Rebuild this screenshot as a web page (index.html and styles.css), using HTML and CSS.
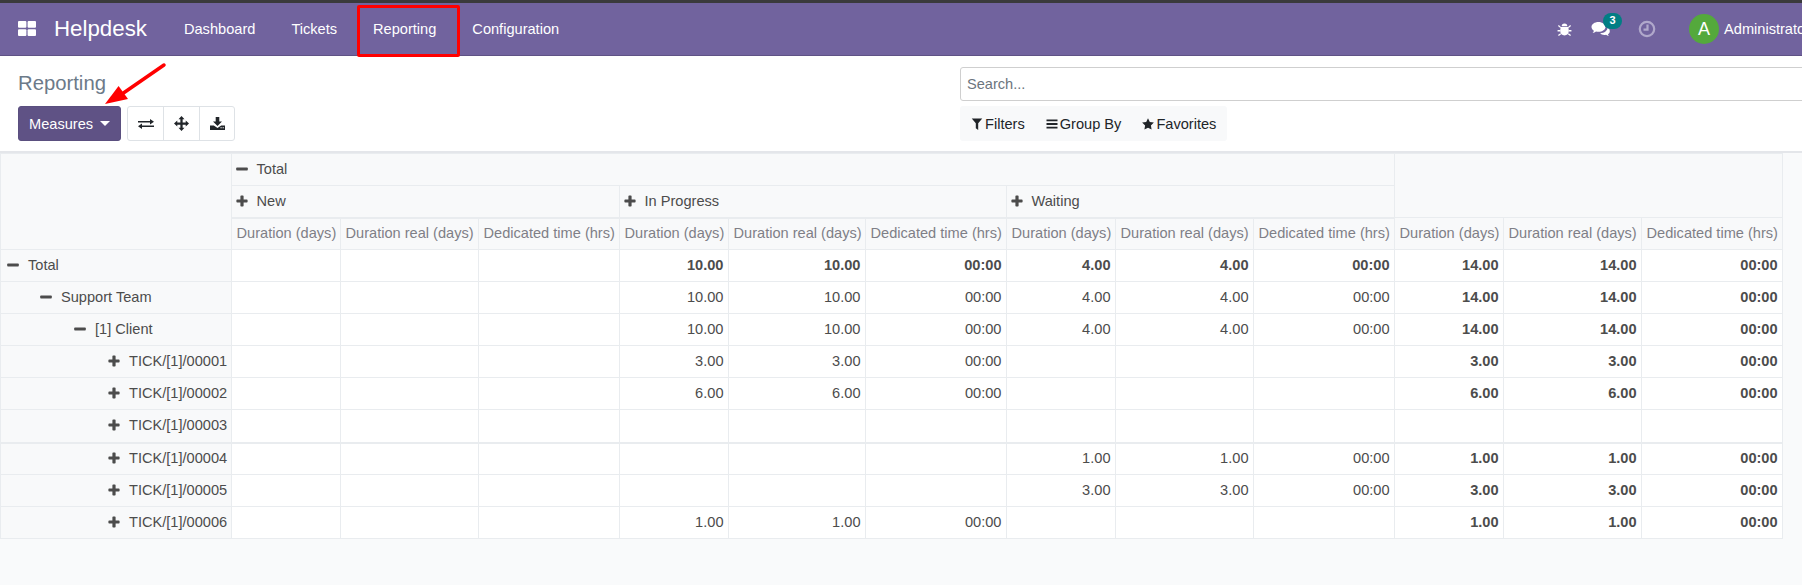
FILE: index.html
```html
<!DOCTYPE html>
<html lang="en">
<head>
<meta charset="utf-8">
<title>Helpdesk - Reporting</title>
<link rel="stylesheet" href="styles.css">
</head>
<body>
<svg class="defs" aria-hidden="true">
  <symbol id="i-plus" viewBox="0 0 12 12"><path d="M4.4 1.2a.8.8 0 0 1 .8-.8h1.6a.8.8 0 0 1 .8.8v3.2h3.2a.8.8 0 0 1 .8.8v1.6a.8.8 0 0 1-.8.8H7.6v3.2a.8.8 0 0 1-.8.8H5.2a.8.8 0 0 1-.8-.8V7.6H1.2a.8.8 0 0 1-.8-.8V5.2a.8.8 0 0 1 .8-.8h3.2z"/></symbol>
  <symbol id="i-minus" viewBox="0 0 12 12"><rect x=".2" y="4.4" width="11.6" height="3.2" rx=".8"/></symbol>
</svg>
<div class="page">
  <header class="navbar">
    <svg class="apps" viewBox="0 0 18 15"><rect width="8.4" height="6.8" rx="1"/><rect x="9.6" width="8.4" height="6.8" rx="1"/><rect y="8.2" width="8.4" height="6.8" rx="1"/><rect x="9.6" y="8.2" width="8.4" height="6.8" rx="1"/></svg>
    <span class="brand">Helpdesk</span>
    <nav class="menu">
      <a>Dashboard</a><a>Tickets</a><a>Reporting</a><a>Configuration</a>
    </nav>
    <div class="systray">
      <svg class="bug" viewBox="0 0 16 16"><path d="M5 4.5a3 3 0 0 1 6 0zM4.2 5.4h7.6c.5 1 .8 2.4.8 4 0 3-1.900 5-4.600 5s-4.600-2-4.600-5c0-1.600.3-3 .8-4z"/><path class="bug-legs" d="M4 6 1.500 3.800M12 6l2.500-2.200M3.500 9.300H.6M12.500 9.300h2.900M4 12.500l-2.500 2M12 12.500l2.500 2"/></svg>
      <span class="chat">
        <svg class="comments" viewBox="0 0 20 16"><path d="M7.500 1C3.600 1 .5 3.200.5 6c0 1.500.9 2.900 2.400 3.800-.2.800-.7 1.500-1.300 2.200 1.300-.2 2.500-.8 3.400-1.500.8.200 1.600.3 2.500.3 3.900 0 7-2.200 7-4.800S11.400 1 7.500 1z"/><path d="M16.500 6.500c.1 3-3 5.600-7.300 5.800.9 1 2.400 1.600 4.100 1.600.6 0 1.200-.1 1.700-.2.800.6 1.800 1 2.900 1.200-.4-.5-.8-1-1-1.700 1.200-.7 1.900-1.800 1.900-3 0-1.500-.9-2.800-2.300-3.700z"/></svg>
        <b class="badge">3</b>
      </span>
      <svg class="clock" viewBox="0 0 18 18"><circle cx="9" cy="9" r="7.200"/><path d="M9.500 4.500v5.200H5.500"/></svg>
      <span class="avatar">A</span>
      <span class="user">Administrator</span>
    </div>
  </header>

  <section class="panel">
    <div class="panel-left">
      <h1 class="title">Reporting</h1>
      <div class="buttons">
        <button class="measures">Measures<i class="caret"></i></button>
        <div class="btn-group">
          <button class="tool"><svg class="t-swap" viewBox="0 0 16 10"><path d="M0 2h12V0l4 2.700-4 2.800V3.500H0zM16 6.500H4v-2L0 7.200 4 10V8h12z"/></svg></button>
          <button class="tool"><svg class="t-move" viewBox="0 0 16 16"><path d="M8 0l3.200 3.500H9.200v3.300h3.300v-2L16 8l-3.500 3.200v-2H9.200v3.300h2L8 16l-3.200-3.500h2V9.200H3.500v2L0 8l3.500-3.200v2h3.300V3.500h-2z"/></svg></button>
          <button class="tool"><svg class="t-down" viewBox="0 0 15 13"><path d="M5.700 0h3.600v4.500H12L7.500 9 3 4.500h2.700z"/><path fill-rule="evenodd" d="M0 8.500h3.800L7.500 11l3.700-2.500H15V13H0zM10.500 10.200v1h1.200v-1zM12.600 10.200v1h1.200v-1z"/></svg></button>
        </div>
      </div>
    </div>
    <div class="panel-right">
      <div class="search">Search...</div>
      <div class="filters">
        <span class="filter"><svg viewBox="0 0 12 13"><path d="M.3.500h11.400L7.300 5.800V13L4.700 11V5.800z"/></svg>Filters</span>
        <span class="filter"><svg viewBox="0 0 12 12"><path d="M.5 1.500h11v1.800H.5zM.5 5.100h11v1.800H.5zM.5 8.700h11v1.800H.5z"/></svg>Group By</span>
        <span class="filter"><svg viewBox="0 0 12 12"><path d="M6 .3l1.800 3.700 4.100.6-3 2.900.7 4.100L6 9.700l-3.600 1.900.7-4.100-3-2.900 4.100-.6z"/></svg>Favorites</span>
      </div>
    </div>
  </section>

  <table class="pivot">
    <colgroup>
      <col class="c-label">
      <col class="c-d"><col class="c-r"><col class="c-t">
      <col class="c-d"><col class="c-r2"><col class="c-t">
      <col class="c-d"><col class="c-r"><col class="c-t">
      <col class="c-d"><col class="c-r"><col class="c-t">
    </colgroup>
    <thead>
      <tr>
        <th rowspan="3"></th>
        <th colspan="9" class="group"><svg class="ico"><use href="#i-minus"/></svg>Total</th>
        <th colspan="3" rowspan="2"></th>
      </tr>
      <tr class="thick">
        <th colspan="3" class="group"><svg class="ico"><use href="#i-plus"/></svg>New</th>
        <th colspan="3" class="group"><svg class="ico"><use href="#i-plus"/></svg>In Progress</th>
        <th colspan="3" class="group"><svg class="ico"><use href="#i-plus"/></svg>Waiting</th>
      </tr>
      <tr class="measure">
        <th>Duration (days)</th><th>Duration real (days)</th><th>Dedicated time (hrs)</th>
        <th>Duration (days)</th><th>Duration real (days)</th><th>Dedicated time (hrs)</th>
        <th>Duration (days)</th><th>Duration real (days)</th><th>Dedicated time (hrs)</th>
        <th>Duration (days)</th><th>Duration real (days)</th><th>Dedicated time (hrs)</th>
      </tr>
    </thead>
    <tbody>
      <tr class="all-bold">
        <th class="lv0"><svg class="ico"><use href="#i-minus"/></svg>Total</th>
        <td></td><td></td><td></td><td>10.00</td><td>10.00</td><td>00:00</td><td>4.00</td><td>4.00</td><td>00:00</td><td>14.00</td><td>14.00</td><td>00:00</td>
      </tr>
      <tr>
        <th class="lv1"><svg class="ico"><use href="#i-minus"/></svg>Support Team</th>
        <td></td><td></td><td></td><td>10.00</td><td>10.00</td><td>00:00</td><td>4.00</td><td>4.00</td><td>00:00</td><td class="sum">14.00</td><td class="sum">14.00</td><td class="sum">00:00</td>
      </tr>
      <tr>
        <th class="lv2"><svg class="ico"><use href="#i-minus"/></svg>[1] Client</th>
        <td></td><td></td><td></td><td>10.00</td><td>10.00</td><td>00:00</td><td>4.00</td><td>4.00</td><td>00:00</td><td class="sum">14.00</td><td class="sum">14.00</td><td class="sum">00:00</td>
      </tr>
      <tr>
        <th class="lv3"><svg class="ico"><use href="#i-plus"/></svg>TICK/[1]/00001</th>
        <td></td><td></td><td></td><td>3.00</td><td>3.00</td><td>00:00</td><td></td><td></td><td></td><td class="sum">3.00</td><td class="sum">3.00</td><td class="sum">00:00</td>
      </tr>
      <tr>
        <th class="lv3"><svg class="ico"><use href="#i-plus"/></svg>TICK/[1]/00002</th>
        <td></td><td></td><td></td><td>6.00</td><td>6.00</td><td>00:00</td><td></td><td></td><td></td><td class="sum">6.00</td><td class="sum">6.00</td><td class="sum">00:00</td>
      </tr>
      <tr class="thick">
        <th class="lv3"><svg class="ico"><use href="#i-plus"/></svg>TICK/[1]/00003</th>
        <td></td><td></td><td></td><td></td><td></td><td></td><td></td><td></td><td></td><td></td><td></td><td></td>
      </tr>
      <tr>
        <th class="lv3"><svg class="ico"><use href="#i-plus"/></svg>TICK/[1]/00004</th>
        <td></td><td></td><td></td><td></td><td></td><td></td><td>1.00</td><td>1.00</td><td>00:00</td><td class="sum">1.00</td><td class="sum">1.00</td><td class="sum">00:00</td>
      </tr>
      <tr>
        <th class="lv3"><svg class="ico"><use href="#i-plus"/></svg>TICK/[1]/00005</th>
        <td></td><td></td><td></td><td></td><td></td><td></td><td>3.00</td><td>3.00</td><td>00:00</td><td class="sum">3.00</td><td class="sum">3.00</td><td class="sum">00:00</td>
      </tr>
      <tr>
        <th class="lv3"><svg class="ico"><use href="#i-plus"/></svg>TICK/[1]/00006</th>
        <td></td><td></td><td></td><td>1.00</td><td>1.00</td><td>00:00</td><td></td><td></td><td></td><td class="sum">1.00</td><td class="sum">1.00</td><td class="sum">00:00</td>
      </tr>
    </tbody>
  </table>

  <div class="mark-box"></div>
  <svg class="mark-arrow" viewBox="0 0 70 60"><path d="M61 9 19 38" class="shaft"/><path d="M2 48 15.600 30 25 43z" class="head"/></svg>
</div>
</body>
</html>
```
FILE: styles.css
```css
* { box-sizing: border-box; }
html, body { margin: 0; height: 100%; overflow: hidden; }
body {
  background: #f9fafb;
  color: #4c4c4c;
  font-family: "Liberation Sans", Arial, sans-serif;
  font-size: 14.6px;
}
.defs { position: absolute; width: 0; height: 0; }
.page { position: relative; width: 1866px; height: 585px; }

.navbar {
  display: flex;
  align-items: center;
  height: 56px;
  border-top: 3px solid #3a3a3c;
  border-bottom: 1px solid #5f5285;
  background: #71639e;
  color: #fff;
}
.apps { width: 18px; height: 15px; margin-left: 18px; margin-bottom: 1px; fill: #fff; }
.brand { margin-left: 18px; font-size: 22.3px; }
.menu { display: flex; margin-left: 37px; }
.menu a { margin-right: 36px; }
.systray { display: flex; align-items: center; margin-left: auto; padding-right: 56px; }
.bug { width: 15px; height: 15px; margin-left: -1px; fill: #fff; }
.bug-legs { fill: none; stroke: #fff; stroke-width: 1.4; }
.chat { position: relative; display: block; width: 20px; height: 16px; margin-left: 19px; }
.comments { display: block; width: 20px; height: 16px; fill: #fff; }
.badge {
  position: absolute;
  left: 12px;
  top: -8px;
  width: 19px;
  height: 16px;
  border-radius: 8px;
  background: #017e84;
  font-size: 11px;
  font-weight: 700;
  line-height: 14px;
  text-align: center;
}
.clock { width: 18px; height: 18px; margin-left: 27px; fill: none; stroke: #b0a8cb; stroke-width: 2.200; }
.avatar {
  width: 30px;
  height: 30px;
  margin-left: 33px;
  border-radius: 50%;
  background: #54a93c;
  font-size: 18px;
  line-height: 30px;
  text-align: center;
}
.user { margin-left: 5px; }

.panel {
  display: flex;
  height: 97px;
  border-bottom: 2px solid #e4e6ea;
  background: #fff;
}
.panel-left { width: 960px; padding-left: 18px; }
.title { margin: 0; padding-top: 14px; height: 50px; color: #6c7a89; font-size: 20.3px; font-weight: 400; line-height: 26px; }
.buttons { display: flex; gap: 6px; }
button { font: inherit; cursor: pointer; }
.measures {
  display: flex;
  align-items: center;
  width: 103px;
  height: 35px;
  padding: 0 0 0 10px;
  border: 1px solid #5a4f7f;
  border-radius: 3px;
  background: #5f5285;
  color: #fff;
}
.caret {
  width: 0;
  height: 0;
  margin-left: 7px;
  border: 5px solid transparent;
  border-top-color: #fff;
  border-bottom: 0;
}
.btn-group { display: flex; height: 35px; border: 1px solid #dee2e6; border-radius: 3px; background: #fff; }
.tool {
  display: flex;
  align-items: center;
  justify-content: center;
  width: 36px;
  padding: 0;
  border: 0;
  border-right: 1px solid #dee2e6;
  background: none;
}
.tool:last-child { width: 34px; border-right: 0; }
.tool svg { fill: #212529; }
.tool .t-swap { width: 16px; height: 10px; }
.tool .t-move { width: 15px; height: 15px; }
.tool .t-down { width: 15px; height: 13px; }
.panel-right { flex: 1; }
.search {
  height: 34px;
  margin-top: 11px;
  padding-left: 6px;
  border: 1px solid #cfcfcf;
  border-radius: 3px;
  color: #6c757d;
  line-height: 32px;
}
.filters {
  display: inline-flex;
  align-items: center;
  gap: 21px;
  height: 35px;
  margin-top: 5px;
  padding: 0 11px;
  border-radius: 3px;
  background: #f8f9fa;
  color: #212529;
}
.filter { display: flex; align-items: center; gap: 2px; }
.filter svg { width: 12px; height: 12px; fill: #212529; }

.pivot {
  table-layout: fixed;
  width: 1782px;
  border-collapse: collapse;
  margin-top: 0;
}
.c-label { width: 231px; }
.c-d { width: 109px; }
.c-r { width: 138px; }
.c-r2 { width: 137px; }
.c-t { width: 141px; }
.pivot th, .pivot td {
  height: 32px;
  padding: 0 4.500px 2px;
  border: 1px solid #e9ecef;
  white-space: nowrap;
  overflow: hidden;
}
.pivot th { background: #f8f9fa; font-weight: 400; text-align: left; }
.pivot td { background: #fff; text-align: right; }
.pivot .measure th { color: #7f7f87; text-align: right; }
.pivot .thick th, .pivot .thick td { border-bottom-width: 2px; }
.pivot thead .thick th { padding-bottom: 1px; }
.pivot tbody .thick th, .pivot tbody .thick td { height: 33px; }
.all-bold td, .pivot .sum { font-weight: 700; }
.ico { display: inline-block; width: 12px; height: 12px; margin-right: 9px; vertical-align: -1px; fill: #4c4c4c; }
.pivot .lv0 { padding-left: 6px; }
.pivot .lv1 { padding-left: 39px; }
.pivot .lv2 { padding-left: 73px; }
.pivot .lv3 { padding-left: 107px; }
.pivot .group { padding-left: 3.500px; }

.mark-box {
  position: absolute;
  left: 357px;
  top: 5px;
  width: 103px;
  height: 52px;
  border: 3.500px solid #f00;
  border-radius: 2px;
}
.mark-arrow { position: absolute; left: 103px; top: 56px; width: 70px; height: 60px; }
.shaft { fill: none; stroke: #f00; stroke-width: 3.500; stroke-linecap: round; }
.head { fill: #f00; }
```
